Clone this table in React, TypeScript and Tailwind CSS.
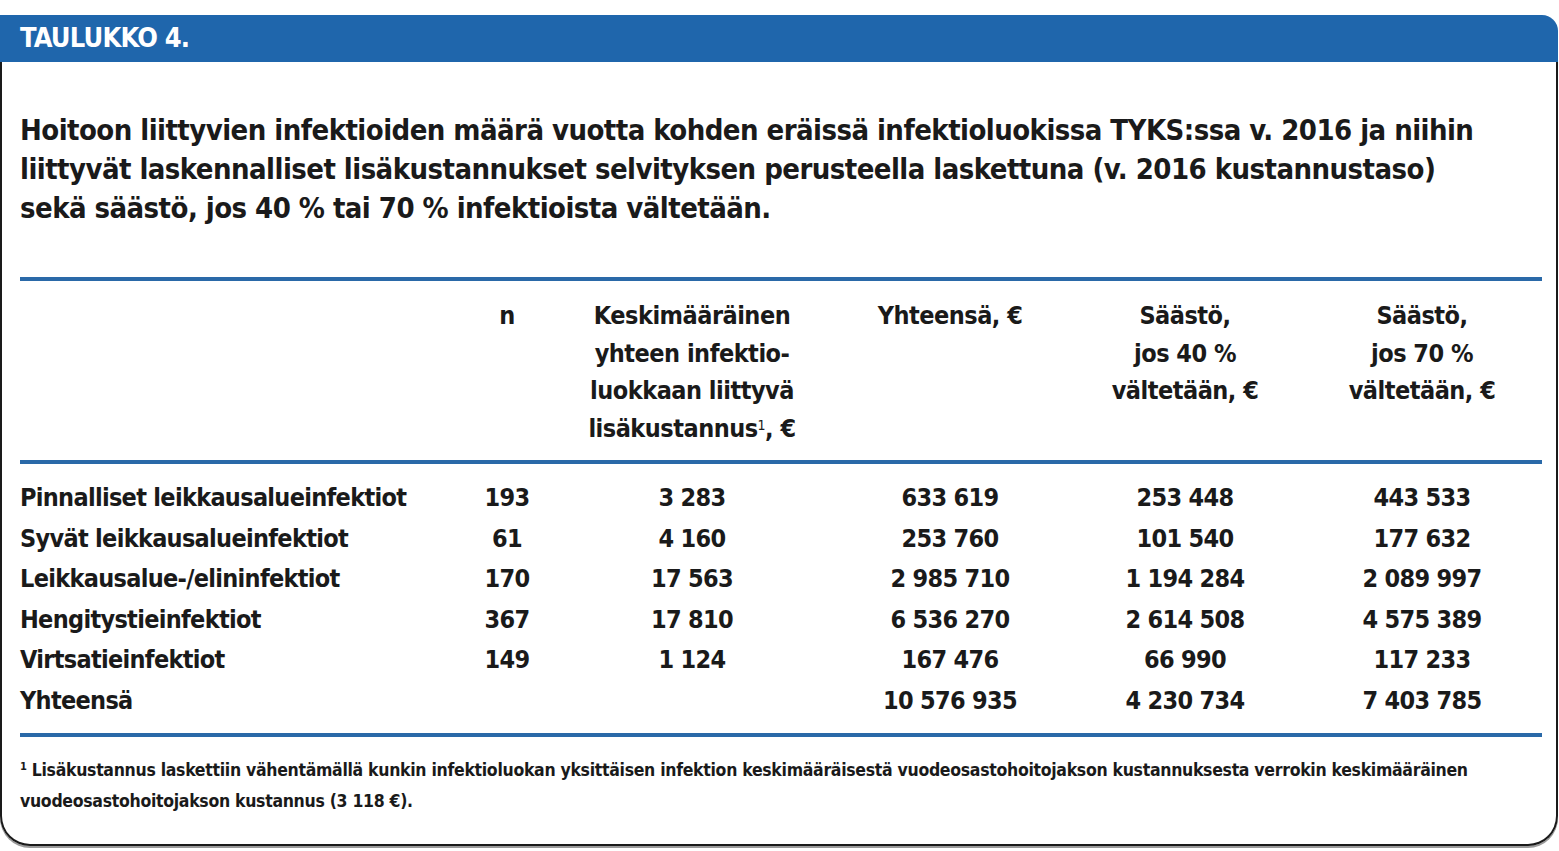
import React from "react";

const font = { fontFamily: '"DejaVu Sans Condensed", "DejaVu Sans", sans-serif' };

const rows: [string, string, string, string, string, string][] = [
  ["Pinnalliset leikkausalueinfektiot", "193", "3 283", "633 619", "253 448", "443 533"],
  ["Syvät leikkausalueinfektiot", "61", "4 160", "253 760", "101 540", "177 632"],
  ["Leikkausalue-/elininfektiot", "170", "17 563", "2 985 710", "1 194 284", "2 089 997"],
  ["Hengitystieinfektiot", "367", "17 810", "6 536 270", "2 614 508", "4 575 389"],
  ["Virtsatieinfektiot", "149", "1 124", "167 476", "66 990", "117 233"],
  ["Yhteensä", "", "", "10 576 935", "4 230 734", "7 403 785"],
];

const cols = "grid grid-cols-[427px_120px_250px_266px_204px_270px]";

export default function App() {
  return (
    <div className="w-[1559px] h-[851px] bg-white pt-[15px] text-[#1a1a1a] [font-stretch:condensed]" style={font}>
      <div className="w-[1558px]">
        <div className="h-[47px] bg-[#1f66ac] rounded-tr-[16px] flex items-center pl-[20px]">
          <span className="text-white font-bold text-[27px] tracking-[-0.8px]">TAULUKKO 4.</span>
        </div>
        <div className="h-[784px] border-l-2 border-r-2 border-b-2 border-[#1a1a1a] rounded-b-[30px] shadow-[0_2px_0_#9a9a9a] pl-[18px]">
          <div className="pt-[49px] font-bold text-[29px] leading-[39px] tracking-[-0.55px]">
            Hoitoon liittyvien infektioiden määrä vuotta kohden eräissä infektioluokissa TYKS:ssa v. 2016 ja niihin
            <br />
            liittyvät laskennalliset lisäkustannukset selvityksen perusteella laskettuna (v. 2016 kustannustaso)
            <br />
            sekä säästö, jos 40 % tai 70 % infektioista vältetään.
          </div>
          <div className="mt-[49px] w-[1522px] h-[4px] bg-[#2a69a8]" />
          <div className={`${cols} pt-[16px] pb-[13px] font-bold text-[25px] leading-[37.5px] tracking-[-0.5px] text-center`}>
            <div />
            <div>n</div>
            <div>
              Keskimääräinen
              <br />
              yhteen infektio-
              <br />
              luokkaan liittyvä
              <br />
              lisäkustannus<sup className="text-[14px] font-normal">1</sup>, €
            </div>
            <div>Yhteensä, €</div>
            <div>
              Säästö,
              <br />
              jos 40 %
              <br />
              vältetään, €
            </div>
            <div>
              Säästö,
              <br />
              jos 70 %
              <br />
              vältetään, €
            </div>
          </div>
          <div className="w-[1522px] h-[4px] bg-[#2a69a8]" />
          <div className="pt-[14px] pb-[11px] font-semibold text-[25px] leading-[40.6px] tracking-[-0.7px]">
            {rows.map((r) => (
              <div key={r[0]} className={cols}>
                <div>{r[0]}</div>
                {r.slice(1).map((v, i) => (
                  <div key={i} className="text-center">
                    {v}
                  </div>
                ))}
              </div>
            ))}
          </div>
          <div className="w-[1522px] h-[4px] bg-[#2a69a8]" />
          <div className="pt-[18px] font-semibold text-[17.5px] leading-[31px] tracking-[-0.3px]">
            <sup className="text-[11px]">1</sup> Lisäkustannus laskettiin vähentämällä kunkin infektioluokan yksittäisen infektion keskimääräisestä vuodeosastohoitojakson kustannuksesta verrokin keskimääräinen
            <br />
            vuodeosastohoitojakson kustannus (3 118 €).
          </div>
        </div>
      </div>
    </div>
  );
}
